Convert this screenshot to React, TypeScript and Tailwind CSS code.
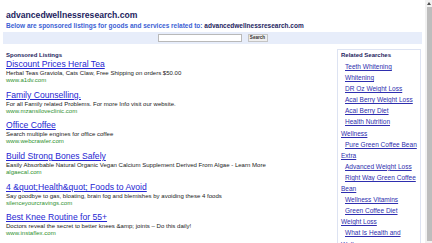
import React from "react";

const listings = [
  {
    title: "Discount Prices Heral Tea",
    desc: "Herbal Teas Graviola, Cats Claw, Free Shipping on orders $50.00",
    url: "www.a1dv.com",
  },
  {
    title: "Family Counselling.",
    desc: "For all Family related Problems. For more Info visit our website.",
    url: "www.mzansiloveclinic.com",
  },
  {
    title: "Office Coffee",
    desc: "Search multiple engines for office coffee",
    url: "www.webcrawler.com",
  },
  {
    title: "Build Strong Bones Safely",
    desc: "Easily Absorbable Natural Organic Vegan Calcium Supplement Derived From Algae - Learn More",
    url: "algaecal.com",
  },
  {
    title: "4 &quot;Health&quot; Foods to Avoid",
    desc: "Say goodbye to gas, bloating, brain fog and blemishes by avoiding these 4 foods",
    url: "silenceyourcravings.com",
  },
  {
    title: "Best Knee Routine for 55+",
    desc: "Doctors reveal the secret to better knees &amp; joints – Do this daily!",
    url: "www.instaflex.com",
  },
];

const related = [
  "Teeth Whitening",
  "Whitening",
  "DR Oz Weight Loss",
  "Acai Berry Weight Loss",
  "Acai Berry Diet",
  "Health Nutrition Wellness",
  "Pure Green Coffee Bean Extra",
  "Advanced Weight Loss",
  "Right Way Green Coffee Bean",
  "Wellness Vitamins",
  "Green Coffee Diet Weight Loss",
  "What Is Health and Wellness",
];

export default function App() {
  return (
    <div className="flex h-[243px] w-[432px] overflow-hidden bg-white font-['Liberation_Sans',Arial,sans-serif]">
      <div className="min-w-0 flex-1 px-[3px]">
        <header className="px-[3px] pt-[9.5px]">
          <h1 className="text-[8.6px] font-bold leading-[11px] text-[#1d1d5e]">
            advancedwellnessresearch.com
          </h1>
          <p className="text-[6.5px] font-bold leading-[10px] text-[#3c5fd4]">
            Below are sponsored listings for goods and services related to:{" "}
            <span className="text-[#1d1d5e]">advancedwellnessresearch.com</span>
          </p>
        </header>

        <div className="mt-[1.5px] flex h-[12px] items-center justify-center gap-[6px] bg-[#e7edfa]">
          <input
            type="text"
            className="h-[8px] w-[84px] border border-[#b9b9b9] bg-white outline-none"
          />
          <button className="flex h-[8px] w-[20px] items-center justify-center border border-[#c4c4c4] bg-[#efefef] text-[4.6px] font-bold leading-none text-[#333]">
            Search
          </button>
        </div>

        <div className="mt-[5px] flex">
          <main className="min-w-0 flex-1 pl-[3px]">
            <h2 className="pt-[2px] text-[6px] font-bold leading-[8px] text-[#1d1d5e]">
              Sponsored Listings
            </h2>
            <div className="flex flex-col">
              {listings.map((l) => (
                <div key={l.url} className="pb-[5.7px]">
                  <a
                    href="#"
                    className="block text-[8.6px] leading-[11px] text-[#2626d2] underline decoration-[0.6px] underline-offset-[1px]"
                  >
                    {l.title}
                  </a>
                  <p className="text-[6.05px] leading-[7px] text-[#222]">{l.desc}</p>
                  <p className="text-[6.05px] leading-[7px] text-[#2f922f]">{l.url}</p>
                </div>
              ))}
            </div>
          </main>

          <aside className="mr-[1px] w-[84px] shrink-0 border border-[#dde3f2] pl-[3px] pr-[3px]">
            <h3 className="text-[6px] font-bold leading-[11px] text-[#1d1d5e]">
              Related Searches
            </h3>
            <ul className="w-[76.7px]">
              {related.map((r) => (
                <li key={r} className="indent-[4px] text-[6.54px] leading-[11.1px]">
                  <a href="#" className="text-[#2e2eae] underline decoration-[0.5px] underline-offset-[1px]">
                    {r}
                  </a>
                </li>
              ))}
            </ul>
          </aside>
        </div>
      </div>

      <div className="flex w-[7px] shrink-0 flex-col bg-[#f1f1f1]">
        <div className="flex h-[7px] items-center justify-center">
          <svg width="4" height="3" viewBox="0 0 4 3">
            <polygon points="2,0 4,3 0,3" fill="#505050" />
          </svg>
        </div>
        <div className="mb-[2px] ml-[1.5px] mr-[0.5px] flex-1 bg-[#bdbdbd]" />
      </div>
    </div>
  );
}
